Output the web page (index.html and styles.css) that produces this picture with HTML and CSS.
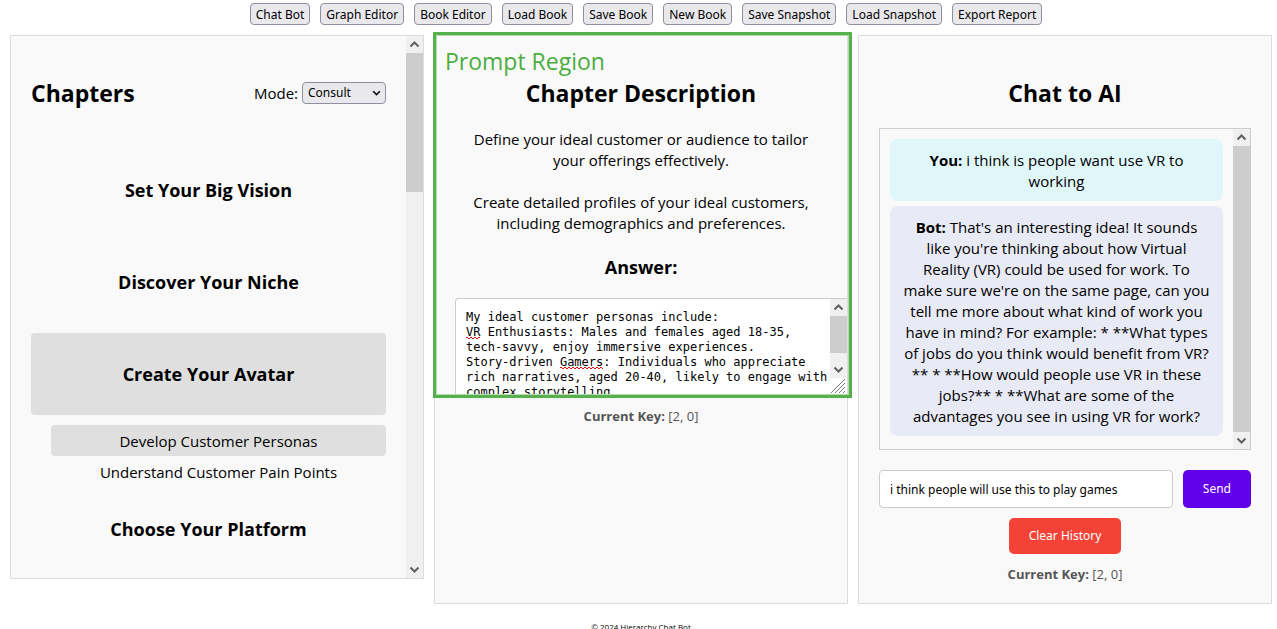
FILE: index.html
```html
<!DOCTYPE html>
<html lang="en">
<head>
<meta charset="utf-8">
<title>Hierarchy Chat Bot</title>
<link rel="stylesheet" href="styles.css">
</head>
<body>
<nav class="toolbar">
  <button type="button">Chat Bot</button>
  <button type="button">Graph Editor</button>
  <button type="button">Book Editor</button>
  <button type="button">Load Book</button>
  <button type="button">Save Book</button>
  <button type="button">New Book</button>
  <button type="button">Save Snapshot</button>
  <button type="button">Load Snapshot</button>
  <button type="button">Export Report</button>
</nav>
<main class="columns">
  <section class="panel chapters">
    <div class="chapters-body">
      <header class="chapters-head">
        <h2>Chapters</h2>
        <div class="mode">
          <label for="mode">Mode:</label>
          <span class="select-wrap">
            <select id="mode"><option>Consult</option></select>
            <svg class="caret" viewBox="0 0 8 6"><path d="M1 1l3 3 3-3"/></svg>
          </span>
        </div>
      </header>
      <h3 class="chapter">Set Your Big Vision</h3>
      <h3 class="chapter">Discover Your Niche</h3>
      <h3 class="chapter selected">Create Your Avatar</h3>
      <ul class="sections">
        <li class="selected">Develop Customer Personas</li>
        <li>Understand Customer Pain Points</li>
      </ul>
      <h3 class="chapter">Choose Your Platform</h3>
    </div>
    <div class="scrollbar">
      <svg class="arrow" viewBox="0 0 17 17"><path d="M4.500 10.500l4-4 4 4"/></svg>
      <div class="track"><div class="thumb thumb-chapters"></div></div>
      <svg class="arrow" viewBox="0 0 17 17"><path d="M4.500 6.500l4 4 4-4"/></svg>
    </div>
  </section>

  <section class="panel description">
    <div class="region"><span>Prompt Region</span></div>
    <h2>Chapter Description</h2>
    <p>Define your ideal customer or audience to tailor<br>your offerings effectively.</p>
    <p>Create detailed profiles of your ideal customers,<br>including demographics and preferences.</p>
    <h3><label for="answer">Answer:</label></h3>
    <div class="answer">
      <textarea id="answer" spellcheck="false">My ideal customer personas include:
VR Enthusiasts: Males and females aged 18-35,
tech-savvy, enjoy immersive experiences.
Story-driven Gamers: Individuals who appreciate
rich narratives, aged 20-40, likely to engage with
complex storytelling.</textarea>
      <svg class="squiggle squiggle-vr"><path d="M0 2l1-1 2 2 2-2 2 2 2-2 2 2 2-2 1 1"/></svg>
      <svg class="squiggle squiggle-gamers"><path d="M0 2l1-1 2 2 2-2 2 2 2-2 2 2 2-2 2 2 2-2 2 2 2-2 2 2 2-2 2 2 2-2 2 2 2-2 2 2 2-2 2 2 2-2 2 2"/></svg>
      <div class="answer-side">
        <div class="scrollbar">
          <svg class="arrow" viewBox="0 0 17 17"><path d="M4.500 10.500l4-4 4 4"/></svg>
          <div class="track"><div class="thumb thumb-answer"></div></div>
          <svg class="arrow" viewBox="0 0 17 17"><path d="M4.500 6.500l4 4 4-4"/></svg>
        </div>
        <svg class="grip" viewBox="0 0 17 17"><path d="M1 15L15 1M5 15L15 5M9 15L15 9M13 15l2-2"/></svg>
      </div>
    </div>
    <div class="key"><strong>Current Key:</strong> [2, 0]</div>
  </section>

  <section class="panel chat">
    <h2>Chat to AI</h2>
    <div class="log">
      <div class="messages">
        <div class="message you"><strong>You:</strong> i think is people want use VR to<br>working</div>
        <div class="message bot"><strong>Bot:</strong> That's an interesting idea! It sounds<br>like you're thinking about how Virtual<br>Reality (VR) could be used for work. To<br>make sure we're on the same page, can you<br>tell me more about what kind of work you<br>have in mind? For example: * **What types<br>of jobs do you think would benefit from VR?<br>** * **How would people use VR in these<br>jobs?** * **What are some of the<br>advantages you see in using VR for work?</div>
      </div>
      <div class="scrollbar">
        <svg class="arrow" viewBox="0 0 17 17"><path d="M4.500 10.500l4-4 4 4"/></svg>
        <div class="track"><div class="thumb thumb-chat"></div></div>
        <svg class="arrow" viewBox="0 0 17 17"><path d="M4.500 6.500l4 4 4-4"/></svg>
      </div>
    </div>
    <form class="composer">
      <input type="text" aria-label="Message" value="i think people will use this to play games">
      <button type="button" class="send">Send</button>
    </form>
    <button type="button" class="clear">Clear History</button>
    <div class="key"><strong>Current Key:</strong> [2, 0]</div>
  </section>
</main>
<footer class="footer">© 2024 Hierarchy Chat Bot</footer>
</body>
</html>
```
FILE: styles.css
```css
* { box-sizing: border-box; }
html { overflow: hidden; }
body {
  margin: 0;
  padding: 3px 5px 0 10px;
  background: #fff;
  color: #000;
  font: 15px/21px "Open Sans", "Noto Sans", sans-serif;
  text-align: center;
}
h2, h3, p, ul { margin: 0; padding: 0; }
h2 { font-size: 23px; line-height: 32px; font-weight: 700; }
h3 { font-size: 18px; line-height: 24px; font-weight: 700; }
button, select, input { font: 12px/16px "Noto Sans", sans-serif; color: #000; margin: 0; }

.toolbar { display: flex; justify-content: center; }
.toolbar button {
  height: 22px;
  margin-left: 10px;
  padding: 1px 5px 0;
  border: 1px solid #8f8f9d;
  border-radius: 4px;
  background: #e9e9ed;
  white-space: nowrap;
}

.columns {
  display: grid;
  grid-template-columns: repeat(3, minmax(0, 1fr));
  gap: 10px;
  margin-top: 10px;
}
.panel {
  position: relative;
  padding: 20px;
  border: 1px solid #ddd;
  background: #f9f9f9;
}

.scrollbar { display: flex; flex-direction: column; flex: none; width: 17px; background: #f0f0f0; }
.arrow { display: block; width: 17px; height: 17px; fill: none; stroke: #606060; stroke-width: 2; }
.track { flex: 1; }
.thumb { background: #cdcdcd; }
.thumb-chapters { height: 139px; }
.thumb-answer { height: 37px; }
.thumb-chat { height: 100%; }

.chapters { display: flex; align-self: start; padding: 0; }
.chapters-body { flex: 1; padding: 20px 20px 8px; }
.chapters-head { display: flex; align-items: center; justify-content: space-between; height: 74px; margin-bottom: 19px; }
.mode { display: flex; align-items: center; gap: 4px; }
.select-wrap { position: relative; display: flex; }
select {
  appearance: none;
  width: 84px;
  height: 22px;
  padding: 0 5px;
  border: 1px solid #8f8f9d;
  border-radius: 4px;
  background: #e9e9ed;
}
.caret { position: absolute; right: 5px; top: 8px; width: 9px; height: 7px; fill: none; stroke: #111; stroke-width: 1.500; }
.chapter { margin-bottom: 10px; padding: 29px 10px; border-radius: 4px; }
.chapter:last-child { margin: 0; }
.selected { background: #dfdfdf; }
.sections { margin-left: 20px; margin-bottom: 1px; list-style: none; }
.sections li { padding: 6px 5px 4px; border-radius: 4px; }

.description h2, .chat h2 { margin-top: 21px; margin-bottom: 19px; }
.description h2 { margin-bottom: 20px; }
.description p { margin-bottom: 21px; white-space: nowrap; }
.description h3 { margin-bottom: 19px; }
.region {
  position: absolute;
  inset: -4px -5px 205px -2px;
  z-index: 2;
  padding: 10px 9px;
  border: 3px solid #56b04b;
  box-shadow: inset 0 0 0 1px #b5dcb0;
  color: #4bae3f;
  font-size: 23px;
  line-height: 32px;
  text-align: left;
  pointer-events: none;
}
.answer {
  position: relative;
  display: flex;
  height: 98px;
  margin-right: -20px;
  border: 1px solid #ccc;
  border-right: 0;
  border-radius: 4px 0 0 4px;
  background: #fff;
}
textarea {
  flex: 1;
  min-width: 0;
  height: 96px;
  padding: 11px 0 0 10px;
  border: 0;
  border-radius: 4px;
  background: transparent;
  color: #000;
  font: 12px/15px "DejaVu Sans Mono", monospace;
  white-space: pre;
  overflow: hidden;
  resize: none;
}
.answer-side { display: flex; flex-direction: column; width: 17px; }
.answer-side .scrollbar { flex: 1; }
.grip { width: 17px; height: 17px; fill: none; stroke: #777; stroke-width: 1; }
.squiggle { position: absolute; height: 4px; overflow: hidden; fill: none; stroke: #e01010; stroke-width: 1; }
.squiggle-vr { left: 10px; top: 37px; width: 14px; }
.squiggle-gamers { left: 104px; top: 67px; width: 43px; }
.key { margin-top: 10px; color: #555; font-size: 13px; line-height: 20px; }

.log { display: flex; height: 322px; border: 1px solid #ccc; }
.messages { flex: 1; display: flex; flex-direction: column; gap: 5px; padding: 10px; min-width: 0; }
.message { padding: 11px 0 9px; border-radius: 8px; white-space: nowrap; }
.you { background: #e0f7fa; }
.bot { background: #e8eaf6; }
.composer { display: flex; gap: 10px; margin: 20px 0 10px; }
.composer input { flex: 1; min-width: 0; height: 38px; padding: 0 10px; border: 1px solid #ccc; border-radius: 4px; background: #fff; }
.send, .clear { border: 0; border-radius: 5px; padding: 10px 20px; color: #fff; }
.send { background: #6200ea; }
.clear { background: #f44336; }
.chat .key { margin-bottom: -1px; }
.footer { margin-top: 17px; font-size: 8px; line-height: 11px; }
```
